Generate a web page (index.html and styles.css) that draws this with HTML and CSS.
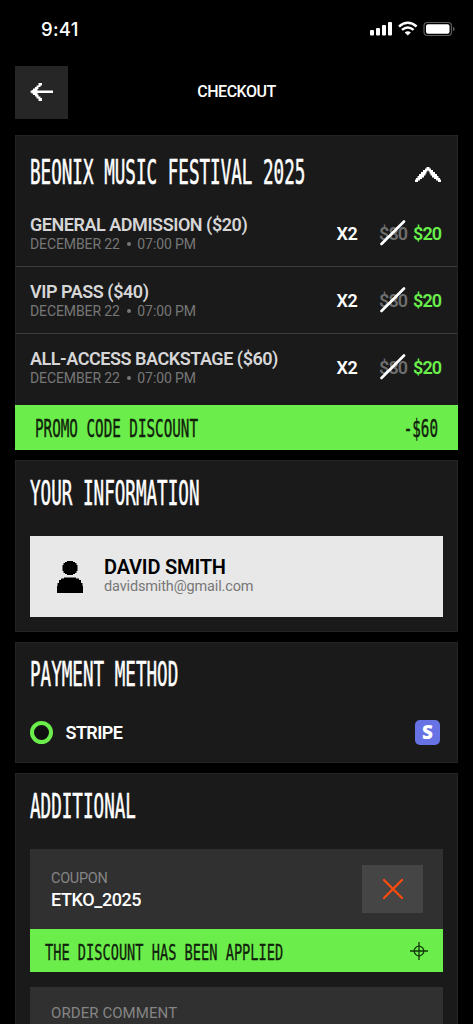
FILE: index.html
```html
<!DOCTYPE html>
<html lang="en">
<head>
<meta charset="utf-8">
<title>Checkout</title>
<link rel="stylesheet" href="styles.css">
</head>
<body>
<div class="screen">
  <div class="status">
    <span class="time">9:41</span>
    <svg class="status-icons" width="86" height="16" viewBox="0 0 86 16">
      <g fill="#fff"><rect x="0" y="9" width="4" height="5.500" rx="1"/><rect x="6" y="7" width="4" height="7.500" rx="1"/><rect x="12" y="4" width="4" height="10.500" rx="1"/><rect x="18" y="1" width="4" height="13.500" rx="1"/></g>
      <g fill="none" stroke="#fff" stroke-width="2.500"><path d="M29 5.500Q37.800 -2 46.600 5.500"/><path d="M32 8.900Q37.800 4.200 43.600 8.900"/></g>
      <path d="M34.700 11.400Q37.800 8.900 40.900 11.400L37.800 14.600Z" fill="#fff"/>
      <rect x="54" y="1.500" width="27.500" height="13" rx="3.500" fill="none" stroke="#5d5d5d" stroke-width="1.200"/>
      <rect x="56" y="3.200" width="23.500" height="9.600" rx="2" fill="#fff"/>
      <path d="M83 5.700Q84.700 6.500 84.700 8T83 10.300Z" fill="#5d5d5d"/>
    </svg>
  </div>
  <header class="topbar">
    <button class="back" aria-label="Back">
      <svg width="24" height="20" viewBox="0 0 24 20"><path fill="#fff" d="M8.500 1h3.500v2.500h-1.500v1.500h-2v2h-1v1.500h15.500v2.500H7.500v1.500h1v2h2v1.500H12V19H8.500v-2.500H6.500v-2H5V13H3v-1.500H1.500v-1h-1V9h1V8H3V6.500h2V5h1.500V3.500h2Z"/></svg>
    </button>
    <h1 class="page-title">CHECKOUT</h1>
  </header>

  <section class="card order">
    <div class="order-head">
      <h2 class="display">BEONIX MUSIC FESTIVAL 2025</h2>
      <svg class="chevron" width="26" height="16" viewBox="0 0 26 16"><path fill="#fff" d="M11.500 0h3v1.500H16V3h2v2h2v2h2v2h1.500v2H25v1.500h1V15h-3v-1.500h-2V12h-2v-1.500h-2V8.500h-1.500v-2H14.500V4.500h-1V3.500h-1v1h-1v2H10.500v2H9v2H7V12H5v1.500H3V15H0v-2.500h1V11h1.500V9H4V7h2V5h2V3h2V1.500h1.500Z"/></svg>
    </div>
    <div class="ticket">
      <div class="info"><div class="name">GENERAL ADMISSION ($20)</div><div class="date">DECEMBER 22&nbsp; <i class="dot"></i>&nbsp; 07:00 PM</div></div>
      <span class="qty">X2</span><span class="old">$80<svg width="26" height="26" viewBox="0 0 26 26"><path d="M1.500 24L24 1.500"/></svg></span><span class="new">$20</span>
    </div>
    <div class="ticket">
      <div class="info"><div class="name">VIP PASS ($40)</div><div class="date">DECEMBER 22&nbsp; <i class="dot"></i>&nbsp; 07:00 PM</div></div>
      <span class="qty">X2</span><span class="old">$80<svg width="26" height="26" viewBox="0 0 26 26"><path d="M1.500 24L24 1.500"/></svg></span><span class="new">$20</span>
    </div>
    <div class="ticket last">
      <div class="info"><div class="name">ALL-ACCESS BACKSTAGE ($60)</div><div class="date">DECEMBER 22&nbsp; <i class="dot"></i>&nbsp; 07:00 PM</div></div>
      <span class="qty">X2</span><span class="old">$80<svg width="26" height="26" viewBox="0 0 26 26"><path d="M1.500 24L24 1.500"/></svg></span><span class="new">$20</span>
    </div>
    <div class="promo"><span class="pixel">PROMO CODE DISCOUNT</span><span class="pixel">-$60</span></div>
  </section>

  <section class="card your-info">
    <h2 class="display">YOUR INFORMATION</h2>
    <div class="person">
      <svg width="28" height="34" viewBox="0 0 28 34"><path d="M11 1h6v1h2v1h1.500v2h1v6h-1v2H19v1h-2v1h-6v-1H9v-1H7.500v-2h-1V5h1V3H9V2h2ZM8 17.500h12v1h3v1.500h2V23h1.500v3h.5v7H1v-7h.5v-3H3v-3h2v-1.500h3Z"/></svg>
      <div><div class="person-name">DAVID SMITH</div><div class="email">davidsmith@gmail.com</div></div>
    </div>
  </section>

  <section class="card payment">
    <h2 class="display">PAYMENT METHOD</h2>
    <div class="method"><span class="radio"></span><span class="method-name">STRIPE</span><span class="stripe">S</span></div>
  </section>

  <section class="card additional">
    <h2 class="display">ADDITIONAL</h2>
    <div class="coupon">
      <div><div class="label small">COUPON</div><div class="code">ETKO_2025</div></div>
      <button class="remove" aria-label="Remove coupon"><svg width="22" height="22" viewBox="0 0 22 22"><path d="M2 2L20 20M20 2L2 20" stroke="#ff4b0a" stroke-width="2.200" stroke-linecap="round"/></svg></button>
    </div>
    <div class="applied"><span class="pixel">THE DISCOUNT HAS BEEN APPLIED</span>
      <svg width="18" height="18" viewBox="0 0 18 18" fill="none" stroke="#123509" stroke-width="1.300"><circle cx="9" cy="9" r="4.800"/><path d="M9 0v18M0 9h18"/></svg>
    </div>
    <div class="comment"><div class="label">ORDER COMMENT</div></div>
  </section>
</div>
</body>
</html>
```
FILE: styles.css
```css
* { box-sizing: border-box; }
body { margin: 0; background: #000; font-family: Roboto, sans-serif; color: #fff; }
h1, h2 { margin: 0; }
button { border: 0; padding: 0; }
svg { display: block; flex: none; }
.screen { width: 473px; height: 1024px; overflow: hidden; padding: 0 15px; background: #000; }
.status { height: 65.500px; display: flex; justify-content: space-between; align-items: flex-start; padding: 18px 2px 0 26px; }
.time { font: 500 18.500px/22px Inter, sans-serif; letter-spacing: .3px; }
.status-icons { margin-top: 3px; }
.topbar { height: 69.500px; display: grid; grid-template-columns: 53px 1fr 53px; align-items: start; }
.back { width: 53px; height: 53px; background: #262626; display: grid; place-items: center; }
.page-title { font-size: 16px; line-height: 52px; font-weight: 500; text-align: center; letter-spacing: -.5px; }

.card { background: #1a1a1a; border: 1px solid #242424; margin-bottom: 10px; padding: 0 14px; }
.display, .pixel { font-family: "DejaVu Sans Mono", monospace; font-weight: 400; white-space: pre; transform-origin: 0 50%; }
.display { font-size: 17.600px; line-height: 24px; transform: scaleY(1.88); -webkit-text-stroke: .3px currentColor; }
.order { height: 315px; padding: 0; border-bottom: 0; }
.order-head { height: 68px; display: flex; align-items: flex-start; justify-content: space-between; padding: 25px 16px 0 14px; }
.chevron { margin-top: 6px; }
.ticket { height: 67px; display: flex; align-items: flex-start; padding: 14px 15px 0 14px; border-bottom: 1px solid #3c3c3c; white-space: nowrap; }
.order-head + .ticket { height: 63px; padding-top: 10px; }
.ticket.last { height: 71px; border: 0; }
.info { flex: 1; }
.name { font-size: 18px; line-height: 21px; font-weight: 600; color: #d6d6d6; letter-spacing: -.46px; }
.date { font-size: 14px; line-height: 18px; color: #777; letter-spacing: -.1px; }
.dot { display: inline-block; width: 4px; height: 4px; border-radius: 50%; background: currentColor; vertical-align: 3px; }
.qty, .old, .new { font-size: 18px; line-height: 21px; font-weight: 600; margin-top: 9px; }
.qty { width: 42.500px; letter-spacing: -.5px; }
.old { width: 34px; color: #6e6e6e; position: relative; letter-spacing: -.9px; }
.old svg { position: absolute; left: 1px; top: -3px; fill: none; stroke: #fff; stroke-width: 2.600px; stroke-linecap: round; }
.new { color: #6af04b; letter-spacing: -.9px; width: 29px; }
.promo { height: 45px; margin: 0 -1px; padding: 0 20px; background: #6bed4b; color: #10200b; display: flex; align-items: center; justify-content: space-between; }
.promo .pixel { font-size: 14.250px; line-height: 20px; transform: scaleY(1.74); -webkit-text-stroke: .25px currentColor; }

.your-info { height: 172px; padding-top: 21px; }
.person { height: 81px; margin-top: 30px; background: #e8e8e8; color: #000; display: flex; align-items: center; gap: 20px; padding-left: 26px; }
.person-name { font-size: 20px; line-height: 21px; font-weight: 600; letter-spacing: -.18px; }
.email { font-size: 14.500px; line-height: 18px; color: #777; letter-spacing: -.15px; }

.payment { height: 121px; padding-top: 20px; }
.method { display: flex; align-items: center; height: 26px; margin-top: 32px; padding-right: 3px; }
.radio { width: 23px; height: 23px; border: 4px solid #6bed4b; border-radius: 50%; background: #101010; margin-right: 12.500px; }
.method-name { flex: 1; font-size: 18px; font-weight: 600; letter-spacing: -.6px; }
.stripe { width: 25px; height: 25px; border-radius: 5px; background: #6772e5; text-align: center; font: 800 19px/25px "Open Sans", sans-serif; }

.additional { height: 300px; padding-top: 21px; }
.coupon { height: 80px; margin-top: 30px; background: #303030; display: flex; align-items: center; justify-content: space-between; padding: 0 20px 0 21px; }
.label { font-size: 15px; line-height: 21px; color: #858585; letter-spacing: .08px; }
.label.small { font-size: 14.500px; letter-spacing: -.3px; }
.code { font-size: 18px; line-height: 22px; font-weight: 500; letter-spacing: -.4px; }
.remove { width: 61px; height: 48px; background: #454545; display: grid; place-items: center; }
.applied { height: 43px; background: #6bed4b; color: #10200b; display: flex; align-items: center; justify-content: space-between; padding: 0 15px; }
.applied .pixel { font-size: 13.650px; line-height: 20px; position: relative; top: 1px; transform: scaleY(1.6); -webkit-text-stroke: .2px currentColor; }
.comment { height: 80px; margin-top: 15px; padding: 16px 21px; background: #303030; }
```
